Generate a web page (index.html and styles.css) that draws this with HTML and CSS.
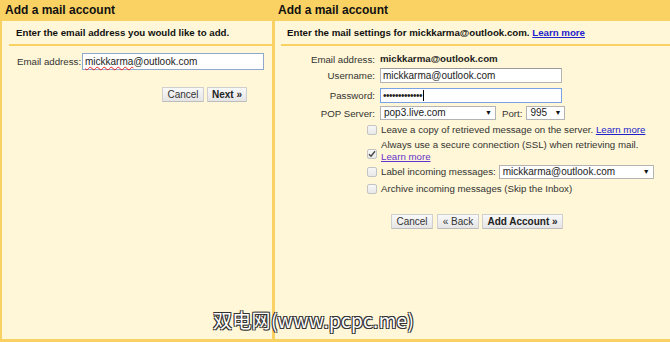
FILE: index.html
```html
<!DOCTYPE html>
<html lang="en">

<head>
  <meta charset="UTF-8">
  <title>Add a mail account</title>
  <link rel="stylesheet" href="styles.css">
</head>

<body>
  <div class="wrap">
    <!-- step 1 -->
    <div class="panel panel-left">
      <div class="panel-title">Add a mail account</div>
      <div class="panel-sub">Enter the email address you would like to add.</div>
      <div class="row-email">
        <span class="label">Email address:</span>
        <span class="field field-email"><span class="misspelt">mickkarma</span>@outlook.com</span>
      </div>
      <div class="actions actions-left">
        <span class="btn btn-cancel">Cancel</span>
        <span class="btn btn-bold btn-next">Next &raquo;</span>
      </div>
    </div>

    <!-- step 2 -->
    <div class="panel panel-right">
      <div class="panel-title">Add a mail account</div>
      <div class="panel-sub">Enter the mail settings for mickkarma@outlook.com. <a href="#" class="link">Learn more</a></div>

      <div class="form">
        <div class="frow frow-email">
          <span class="flabel">Email address:</span>
          <span class="fvalue">mickkarma@outlook.com</span>
        </div>
        <div class="frow frow-user">
          <span class="flabel">Username:</span>
          <span class="field field-wide">mickkarma@outlook.com</span>
        </div>
        <div class="frow frow-pass">
          <span class="flabel">Password:</span>
          <span class="field field-wide field-focus">&bull;&bull;&bull;&bull;&bull;&bull;&bull;&bull;&bull;&bull;&bull;&bull;&bull;<span class="caret"></span></span>
        </div>
        <div class="frow frow-pop">
          <span class="flabel">POP Server:</span>
          <span class="select select-pop">pop3.live.com<span class="arrow">&#9660;</span></span>
          <span class="port-label">Port:</span>
          <span class="select select-port">995<span class="arrow">&#9660;</span></span>
        </div>
      </div>

      <div class="checks">
        <div class="check check-1">
          <span class="box"></span>
          <span class="ctext">Leave a copy of retrieved message on the server. <a href="#" class="link">Learn more</a></span>
        </div>
        <div class="check check-2">
          <span class="box box-on">
            <svg width="8" height="8" viewBox="0 0 8 8"><path d="M1 4.2 L3 6.2 L7 1.3" fill="none" stroke="#444" stroke-width="1.4"/></svg>
          </span>
          <span class="ctext">Always use a secure connection (SSL) when retrieving mail.<br><a href="#" class="link link-visited">Learn more</a></span>
        </div>
        <div class="check check-3">
          <span class="box"></span>
          <span class="ctext">Label incoming messages:</span>
          <span class="select select-label">mickkarma@outlook.com<span class="arrow">&#9660;</span></span>
        </div>
        <div class="check check-4">
          <span class="box"></span>
          <span class="ctext">Archive incoming messages (Skip the Inbox)</span>
        </div>
      </div>

      <div class="actions actions-right">
        <span class="btn btn-cancel">Cancel</span>
        <span class="btn btn-back">&laquo; Back</span>
        <span class="btn btn-bold btn-add">Add Account &raquo;</span>
      </div>
    </div>
  </div>

  <div class="watermark">双电网(www.pcpc.me)</div>
</body>

</html>
```

FILE: styles.css
```css
* {
  box-sizing: border-box;
}

body {
  margin: 0;
  background: #fff7d7;
  font-family: "Liberation Sans", Arial, sans-serif;
  font-size: 9.7px;
  color: #222;
  position: relative;
  height: 342px;
  overflow: hidden;
}

.wrap {
  display: flex;
  height: 342px;
  border-bottom: 3px solid #fad163;
}

.panel {
  background: #fff7d7;
}

.panel-left {
  width: 275px;
  border-left: 2px solid #fad163;
  border-right: 3px solid #fad163;
}

.panel-right {
  flex: 1;
}

/* 黃色標題列 */
.panel-title {
  height: 21px;
  padding: 2px 0 0 3px;
  background: #fad163;
  font-size: 12px;
  font-weight: bold;
  line-height: 17px;
  color: #111;
}

.panel-sub {
  height: 25px;
  margin-left: 7px;
  padding-left: 7px;
  border-bottom: 2px solid #fad163;
  font-weight: bold;
  line-height: 23px;
  color: #111;
}

.panel-right .panel-sub {
  margin-left: 6px;
  padding-left: 6px;
}

.link {
  color: #2222cc;
  font-weight: bold;
}

.ctext .link {
  font-weight: normal;
}

.link-visited {
  color: #6633cc;
}

.label,
.flabel {
  color: #333;
}

.field {
  display: inline-block;
  background: #fff;
  border: 1px solid #b4b4b4;
  border-top-color: #9a9a9a;
  padding: 0 2px;
  color: #222;
  font-size: 10px;
}

.misspelt {
  text-decoration: underline wavy #e22;
  text-decoration-thickness: 1px;
}

/* 左邊 */
.row-email {
  display: flex;
  align-items: center;
  margin-top: 7px;
  padding-left: 15px;
}

.row-email .label {
  width: 65px;
}

.field-email {
  width: 182px;
  height: 17px;
  line-height: 15px;
  border-color: #8fa8cc;
}

.actions {
  display: flex;
  gap: 3px;
}

.actions-left {
  margin-top: 17px;
  padding-left: 160px;
}

.btn {
  display: inline-block;
  height: 15px;
  line-height: 13px;
  border: 1px solid #cfcfcf;
  border-bottom-color: #bdbdbd;
  background: linear-gradient(#f9f9f9, #e5e5e5);
  border-radius: 1px;
  text-align: center;
  color: #333;
  font-size: 10px;
}

.btn-bold {
  font-weight: bold;
  color: #222;
}

.btn-cancel {
  width: 42px;
}

.btn-next {
  width: 40px;
}

/* 右邊表單 */
.form {
  padding-top: 6px;
}

.frow {
  display: flex;
  align-items: center;
}

.flabel {
  width: 101px;
  padding-right: 1px;
  text-align: right;
}

.fvalue,
.frow .field,
.frow .select {
  margin-left: 4px;
}

.fvalue {
  font-weight: bold;
  color: #222;
  line-height: 14px;
}

.frow-user {
  margin-top: 2px;
}

.frow-pass {
  margin-top: 5px;
}

.frow-pop {
  margin-top: 3px;
}

.field-wide {
  width: 182px;
  height: 15px;
  line-height: 13px;
}

.field-focus {
  border-color: #7aa3e6;
  letter-spacing: -0.5px;
}

.caret {
  display: inline-block;
  width: 1px;
  height: 11px;
  background: #000;
  vertical-align: -2px;
  margin-left: 1px;
}

.select {
  position: relative;
  display: inline-block;
  height: 14px;
  line-height: 12px;
  background: #fff;
  border: 1px solid #b4b4b4;
  padding-left: 3px;
  font-size: 10px;
  color: #222;
}

.arrow {
  position: absolute;
  right: 3px;
  top: 0;
  font-size: 7px;
  color: #111;
}

.select-pop {
  width: 116px;
}

.port-label {
  margin-left: 6px;
  color: #333;
}

.frow .select-port {
  width: 39px;
  margin-left: 4px;
}

/* 勾選框 */
.checks {
  padding-left: 92px;
  margin-top: 4px;
}

.check {
  display: flex;
  align-items: center;
  line-height: 12px;
}

.box {
  flex: none;
  width: 10px;
  height: 10px;
  margin-right: 4px;
  border: 1px solid #c4c4c4;
  border-radius: 2px;
  background: linear-gradient(#f7f7f7, #e8e8e8);
  display: flex;
  align-items: center;
  justify-content: center;
}

.ctext {
  color: #333;
}

.check-2 {
  margin-top: 3px;
}

.check-2 .box {
  margin-top: 6px;
}

.check-3 {
  margin-top: 2px;
}

.select-label {
  width: 155px;
  margin-left: 3px;
  height: 14px;
}

.check-4 {
  margin-top: 4px;
}

.actions-right {
  margin-top: 19px;
  padding-left: 116px;
}

.btn-back {
  width: 42px;
  margin-left: 1px;
}

.btn-add {
  width: 81px;
}

/* 浮水印 */
.watermark {
  position: absolute;
  left: 213px;
  top: 306px;
  font-family: "Noto Sans CJK SC", sans-serif;
  font-size: 19px;
  color: #fff;
  letter-spacing: 0.3px;
  text-shadow: -1px -1px 0 #333, 1px -1px 0 #333, -1px 1px 0 #333, 1px 1px 0 #333;
}
```
